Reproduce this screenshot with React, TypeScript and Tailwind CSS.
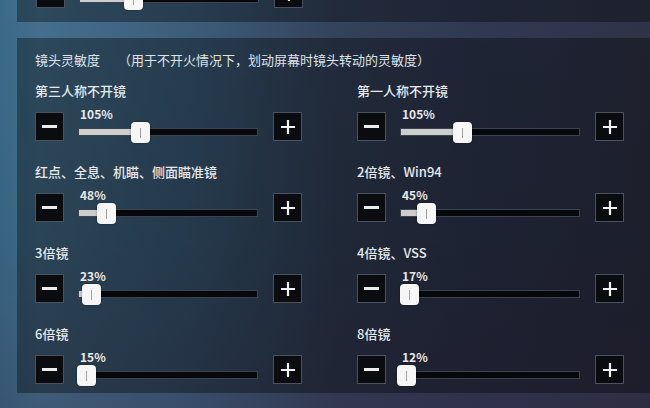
import React from 'react';

const TRACK_W = 180;

// slider range in the game is 1% - 300%
const toPos = (v: number) => ((v - 1) / 299) * TRACK_W;

const StepButton = ({ plus }: { plus?: boolean }) => (
    <div className="w-[29px] h-[29px] shrink-0 bg-[#0b0c10] border border-[#4a525f] flex items-center justify-center">
        {plus ? (
            <svg width="16" height="16" viewBox="0 0 16 16">
                <path d="M8 1v14M1 8h14" stroke="#f2f2f2" strokeWidth="2.2" />
            </svg>
        ) : (
            <div className="w-[15px] h-[2.5px] bg-[#ececec]" />
        )}
    </div>
);

const Slider = ({ value, showLabel = true }: { value: number; showLabel?: boolean }) => {
    const pos = toPos(value);
    return (
        <div className="relative h-[29px] w-[180px] shrink-0">
            {showLabel && (
                <span className="absolute left-[2px] top-[-5px] text-[12px] font-bold leading-[14px] text-[#e8e8e8]">
                    {value}%
                </span>
            )}
            <div className="absolute left-0 right-0 top-[16px] h-[8px] border border-[#3b4350] bg-[#07080b]">
                <div className="h-full bg-[#cdcdcd]" style={{ width: pos }} />
            </div>
            <div
                className="absolute top-[10px] h-[21px] w-[19px] rounded-[4px] bg-[#f6f6f6] flex items-center justify-center shadow-[0_0_2px_rgba(0,0,0,0.5)]"
                style={{ left: pos - 9.5 }}
            >
                <div className="h-[10px] w-px bg-[#a0a0a0]" />
            </div>
        </div>
    );
};

const Control = ({ value, showLabel = true }: { value: number; showLabel?: boolean }) => (
    <div className="flex items-center">
        <StepButton />
        <div className="ml-[14px]">
            <Slider value={value} showLabel={showLabel} />
        </div>
        <div className="ml-[15px]">
            <StepButton plus />
        </div>
    </div>
);

const rows = [
    { name: '第三人称不开镜', value: 105 },
    { name: '第一人称不开镜', value: 105 },
    { name: '红点、全息、机瞄、侧面瞄准镜', value: 48 },
    { name: '2倍镜、Win94', value: 45 },
    { name: '3倍镜', value: 23 },
    { name: '4倍镜、VSS', value: 17 },
    { name: '6倍镜', value: 15 },
    { name: '8倍镜', value: 12 },
];

export default function App() {
    return (
        <div
            className="w-[650px] h-[408px] overflow-hidden pl-[17px] bg-[linear-gradient(180deg,rgba(0,0,0,0)_0%,rgba(0,0,0,0.06)_60%,rgba(45,25,50,0.25)_100%),linear-gradient(90deg,#3b6a89_0%,#45708d_6%,#3c5d7a_30%,#34425b_52%,#303852_75%,#2f3348_100%)] text-[#e4e8ec]"
            style={{ fontFamily: '"Noto Sans CJK SC", "Noto Sans", sans-serif' }}
        >
            {/* previous panel, cut off at the top */}
            <div className="h-[22px] overflow-hidden bg-black/35 pl-[19px]">
                <div className="-mt-[21px]">
                    <Control value={91} showLabel={false} />
                </div>
            </div>

            <div className="mt-[16px] h-[355px] bg-black/35 pl-[18px] pt-[12px]">
                <div className="text-[13px] leading-[20px] text-[#dfe3e8] whitespace-nowrap">
                    镜头灵敏度
                    <span className="ml-[18px]">（用于不开火情况下，划动屏幕时镜头转动的灵敏度）</span>
                </div>
                <div className="mt-[13px] grid grid-cols-[322px_322px] gap-y-[23px]">
                    {rows.map((r) => (
                        <div key={r.name}>
                            <div className="text-[13px] leading-[16px] font-medium text-[#e6e9ec] whitespace-nowrap">{r.name}</div>
                            <div className="mt-[13px]">
                                <Control value={r.value} />
                            </div>
                        </div>
                    ))}
                </div>
            </div>
        </div>
    );
}
